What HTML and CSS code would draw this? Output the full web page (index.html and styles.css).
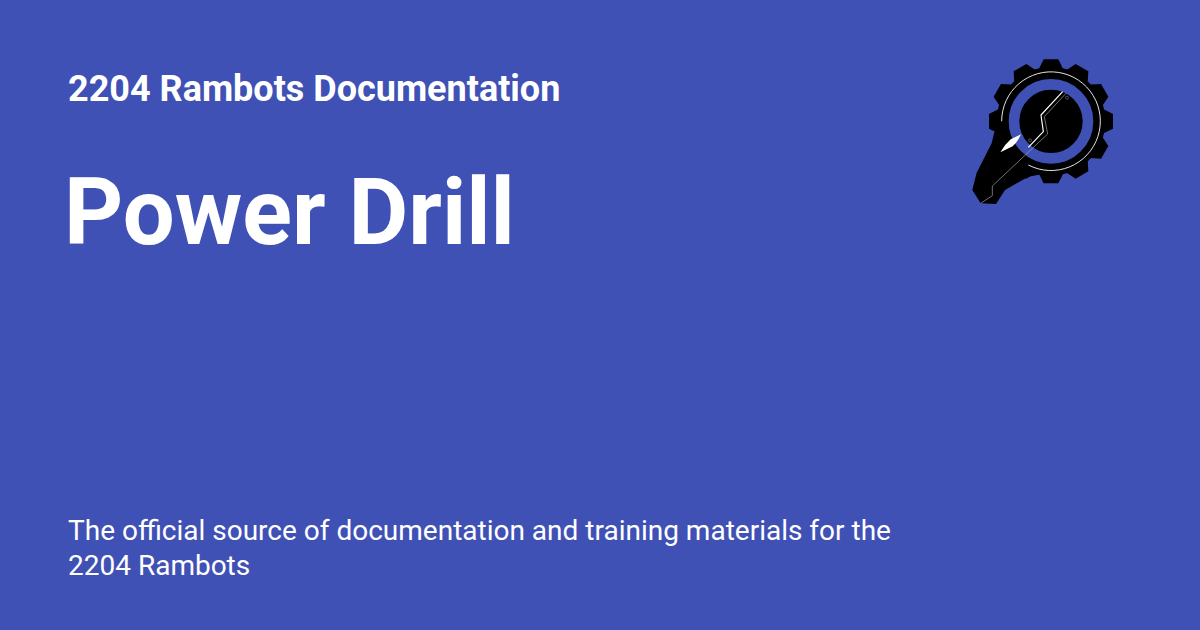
FILE: index.html
```html
<!DOCTYPE html>
<html>
<head>
    <title>Power Drill</title>
    <link rel="stylesheet" href="styles.css">
</head>
<body>
    <div class="card">
        <div class="top">
            <div class="titles">
                <div class="site-name">2204 Rambots Documentation</div>
                <h1>Power Drill</h1>
            </div>
            <svg class="logo" viewBox="0 0 510 495" width="170" height="165">
                <defs>
                    <polygon id="tooth" points="-22,-186 22,-186 36,-158 -36,-158"/>
                </defs>
                <g transform="translate(273 214)">
                    <circle r="163"/>
                    <use href="#tooth"/>
                    <use href="#tooth" transform="rotate(30)"/>
                    <use href="#tooth" transform="rotate(60)"/>
                    <use href="#tooth" transform="rotate(90)"/>
                    <use href="#tooth" transform="rotate(120)"/>
                    <use href="#tooth" transform="rotate(150)"/>
                    <use href="#tooth" transform="rotate(180)"/>
                    <use href="#tooth" transform="rotate(210)"/>
                    <use href="#tooth" transform="rotate(270)"/>
                    <use href="#tooth" transform="rotate(300)"/>
                    <use href="#tooth" transform="rotate(330)"/>
                </g>
                <polygon points="108,225 95,280 50,368 37,420 62,460 108,462 135,420 205,380 260,370 200,230"/>
                <circle cx="273" cy="214" r="111" fill="none" stroke="#3f51b5" stroke-width="32"/>
                <path d="M125 214 A148 148 0 1 1 205 345" fill="none" stroke="#e4e4e4" stroke-width="3"/>
                <path d="M308 125 L243 195 L250 245 L205 292" fill="none" stroke="#fff" stroke-width="3.5"/>
                <path d="M318 130 L253 200 L263 252 L97 408 L97 437 L62 460" fill="none" stroke="#a8a8a8" stroke-width="2"/>
                <circle cx="321" cy="143" r="4.5" fill="none" stroke="#777" stroke-width="2"/>
                <circle cx="210" cy="271" r="4.5" fill="none" stroke="#777" stroke-width="2"/>
                <path d="M183 253 L152 268 Q134 284 121 307 L158 289 Q174 274 183 253Z" fill="#fff"/>
            </svg>
        </div>
        <p class="desc">The official source of documentation and training materials for the 2204 Rambots</p>
    </div>
</body>
</html>
```

FILE: styles.css
```css
body {
    margin: 0;
    background-color: #3f51b5;
    color: white;
    font-family: Roboto, sans-serif;
}

.card {
    width: 1200px;
    height: 630px;
    box-sizing: border-box;
    padding: 68px 70px 47px 68px;
    display: flex;
    flex-direction: column;
    justify-content: space-between;
    overflow: hidden;
}

.top {
    display: flex;
    justify-content: space-between;
    align-items: flex-start;
}

.site-name {
    font-size: 36px;
    font-weight: 700;
    line-height: 42px;
}

h1 {
    margin: 49px 0 0 -4px;
    font-size: 92px;
    font-weight: 700;
    line-height: 108px;
}

.logo {
    margin-top: -18px;
}

.desc {
    margin: 0;
    width: 840px;
    font-size: 28px;
    line-height: 35px;
}
```
